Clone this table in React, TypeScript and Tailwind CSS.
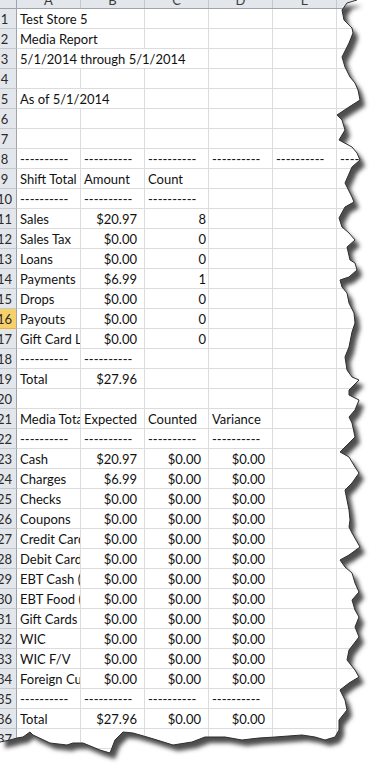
import React from 'react';

const COLS = ['A', 'B', 'C', 'D', 'E', 'F'];
const D = '----------';

// A..F per row, row number = index + 1
const rows: string[][] = [
  ['Test Store 5'],
  ['Media Report'],
  ['5/1/2014 through 5/1/2014'],
  [],
  ['As of 5/1/2014'],
  [],
  [],
  [D, D, D, D, D, D],
  ['Shift Total', 'Amount', 'Count'],
  [D, D, D],
  ['Sales', '$20.97', '8'],
  ['Sales Tax', '$0.00', '0'],
  ['Loans', '$0.00', '0'],
  ['Payments', '$6.99', '1'],
  ['Drops', '$0.00', '0'],
  ['Payouts', '$0.00', '0'],
  ['Gift Card Liability', '$0.00', '0'],
  [D, D],
  ['Total', '$27.96'],
  [],
  ['Media Totals', 'Expected', 'Counted', 'Variance'],
  [D, D, D, D],
  ['Cash', '$20.97', '$0.00', '$0.00'],
  ['Charges', '$6.99', '$0.00', '$0.00'],
  ['Checks', '$0.00', '$0.00', '$0.00'],
  ['Coupons', '$0.00', '$0.00', '$0.00'],
  ['Credit Cards', '$0.00', '$0.00', '$0.00'],
  ['Debit Cards', '$0.00', '$0.00', '$0.00'],
  ['EBT Cash (Benefit)', '$0.00', '$0.00', '$0.00'],
  ['EBT Food (Benefit)', '$0.00', '$0.00', '$0.00'],
  ['Gift Cards', '$0.00', '$0.00', '$0.00'],
  ['WIC', '$0.00', '$0.00', '$0.00'],
  ['WIC F/V', '$0.00', '$0.00', '$0.00'],
  ['Foreign Currency', '$0.00', '$0.00', '$0.00'],
  [D, D, D, D],
  ['Total', '$27.96', '$0.00', '$0.00'],
  [],
  [],
];

// text in column A that runs over empty neighbours
const spans: Record<number, number> = { 1: 2, 2: 2, 3: 3, 5: 2 };

const rightEdge = [
  [357, 0], [347, 3], [342, 10], [344, 20], [352, 28], [353, 33], [349, 43], [342, 57], [345, 67], [350, 77],
  [355, 83], [358, 90], [360, 100], [349, 107], [337, 115], [342, 120], [345, 130], [339, 140], [352, 147],
  [357, 153], [360, 160], [352, 167], [345, 183], [352, 197], [354, 202], [345, 207], [339, 218], [342, 227],
  [349, 233], [355, 240], [347, 247], [350, 260], [355, 263], [357, 270], [349, 277], [340, 280], [342, 287],
  [347, 293], [349, 303], [354, 313], [355, 323], [352, 332], [349, 347], [345, 357], [347, 370], [352, 377],
  [359, 380], [349, 390], [349, 395], [359, 400], [355, 410], [349, 417], [352, 423], [355, 437], [345, 447],
  [340, 452], [349, 457], [355, 467], [359, 473], [352, 483], [345, 490], [347, 500], [349, 510], [350, 520],
  [349, 527], [352, 533], [360, 547], [349, 555], [340, 560], [345, 567], [352, 573], [355, 583], [359, 592],
  [352, 600], [355, 610], [359, 617], [355, 627], [359, 637], [349, 650], [347, 660], [355, 670], [359, 677],
  [349, 683], [340, 690], [345, 700], [347, 710], [339, 720], [339, 730], [335, 737],
];
const bottomEdge = [
  [325, 740], [315, 737], [302, 735], [275, 737], [259, 738], [242, 740], [225, 737], [205, 737], [192, 742],
  [173, 745], [157, 740], [147, 737], [133, 733], [123, 732], [115, 740], [110, 753], [100, 750], [83, 743],
  [73, 743], [67, 745], [50, 743], [33, 735], [30, 732], [23, 737], [17, 738], [10, 740], [0, 742],
];

const edge = [...rightEdge, ...bottomEdge];
const edgeLine = 'M' + edge.map((p) => p.join(' ')).join(' L');
const page = 'M0 0 L' + edge.map((p) => p.join(' ')).join(' L') + ' Z';
const outside = 'M-10 -10 H400 V790 H-10 Z ' + page;

function TornEdge() {
  return (
    <svg className="absolute left-0 top-0 pointer-events-none" width="384" height="776" viewBox="0 0 384 776">
      <defs>
        <filter id="soft" x="-10%" y="-10%" width="120%" height="120%">
          <feGaussianBlur stdDeviation="2.2" />
        </filter>
        <clipPath id="out">
          <path d={outside} clipRule="evenodd" />
        </clipPath>
      </defs>
      <path d={outside} fill="#ffffff" fillRule="evenodd" />
      <g clipPath="url(#out)">
        <path d={page} transform="translate(5 6)" fill="#4e4e4e" filter="url(#soft)" />
      </g>
      <path d={edgeLine} fill="none" stroke="#2f2f2f" strokeWidth="1" />
    </svg>
  );
}

function Cell({ text, span = 1, last }: { text?: string; span?: number; last?: boolean }) {
  const money = text?.startsWith('$');
  const count = !!text && /^\d+$/.test(text);
  const w = span === 3 ? 'w-[192px]' : span === 2 ? 'w-32' : 'w-16';
  return (
    <div
      className={`${last ? 'flex-1' : `${w} shrink-0`} h-5 border-b border-r border-[#dadcdd] overflow-hidden whitespace-nowrap leading-[20px] ${
        money ? 'text-right pr-[7px]' : count ? 'text-right pr-[2px]' : 'pl-[3px]'
      }`}
    >
      {text}
    </div>
  );
}

export default function App() {
  return (
    <div className="relative w-[384px] h-[776px] overflow-hidden bg-white font-['Lato','Carlito',sans-serif] text-[13px] text-[#111]">
      {/* column header */}
      <div className="flex h-[9px] border-b border-[#9ea4ac] bg-[#e3e6ea]">
        <div className="w-[17px] shrink-0 border-r border-[#9ea4ac]" />
        {COLS.map((c, i) => (
          <div
            key={c}
            className={`${i === 5 ? 'flex-1' : 'w-16 shrink-0'} border-r border-[#c4c8ce] overflow-hidden text-center text-[#3c3c3c] text-[13px] leading-[14px]`}
          >
            <div className="-mt-[7px]">{c}</div>
          </div>
        ))}
      </div>

      {rows.map((r, i) => {
        const n = i + 1;
        const span = spans[n] ?? 1;
        const cells: React.ReactNode[] = [];
        let c = 0;
        while (c < COLS.length) {
          const s = c === 0 ? span : 1;
          cells.push(<Cell key={c} text={r[c]} span={s} last={c === COLS.length - 1} />);
          c += s;
        }
        return (
          <div key={n} className="flex h-5">
            <div
              className={`w-[17px] shrink-0 h-5 overflow-hidden border-b border-r border-[#9ea4ac] ${
                n === 16 ? 'bg-[#f7d06a] border-b-[#e2b54a]' : 'bg-[#e3e6ea] border-b-[#c4c8ce]'
              }`}
            >
              <div className="w-[25px] -ml-[8px] text-center leading-[20px] text-[#2a2a2a]">{n}</div>
            </div>
            {cells}
          </div>
        );
      })}

      <TornEdge />
    </div>
  );
}
